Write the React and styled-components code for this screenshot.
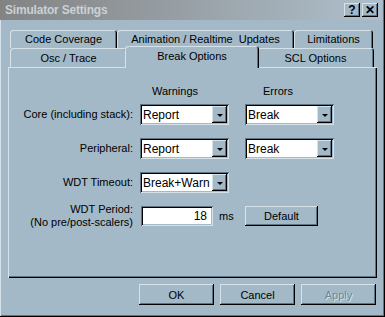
import React from "react";
import styled, { createGlobalStyle } from "styled-components";

const face = "#a3b9c7";
const light = "#d6e2ea";
const shadow = "#5e7483";
const dark = "#000000";

const GlobalStyle = createGlobalStyle`
  body {
    margin: 0;
    background: ${face};
    font-family: "Liberation Sans", Arial, sans-serif;
    font-size: 11px;
    color: #000;
  }
`;

const Window = styled.div`
  width: 385px;
  height: 317px;
  box-sizing: border-box;
  background: ${face};
  display: flex;
  flex-direction: column;
  box-shadow: inset -1px -1px ${dark}, inset 1px 0 ${light}, inset -2px -2px ${shadow};
`;

const TitleBar = styled.div`
  height: 20px;
  margin-right: 3px;
  display: flex;
  align-items: center;
  padding: 0 4px 0 5px;
  background: linear-gradient(to right, #838383, #aebfcb);
`;

const Title = styled.div`
  flex: 1;
  font-weight: bold;
  font-size: 12px;
  color: #c9d1d7;
  letter-spacing: -0.2px;
`;

const CaptionButton = styled.div`
  width: 16px;
  height: 14px;
  box-sizing: border-box;
  margin-left: ${p => p.$gap || 0}px;
  background: ${face};
  display: flex;
  align-items: center;
  justify-content: center;
  font-weight: bold;
  font-size: 12px;
  line-height: 1;
  box-shadow: inset -1px -1px ${dark}, inset 1px 1px ${light}, inset -2px -2px ${shadow};
`;

const Tabs = styled.div`
  margin: 10px 0 0 10px;
  display: flex;
  flex-direction: column;
`;

const TabRow = styled.div`
  display: flex;
  align-items: flex-end;
  height: ${p => p.$h}px;
`;

const Tab = styled.div`
  width: ${p => p.$w}px;
  height: ${p => (p.$active ? p.$h + 3 : p.$h)}px;
  margin: ${p => (p.$active ? "0 -2px -1px -2px" : "0")};
  padding-bottom: ${p => (p.$active ? 2 : 0)}px;
  position: relative;
  z-index: ${p => (p.$active ? 2 : 0)};
  box-sizing: border-box;
  flex-shrink: 0;
  background: ${face};
  border-radius: 3px 3px 0 0;
  display: flex;
  align-items: center;
  justify-content: center;
  white-space: pre;
  box-shadow: inset 1px 1px ${light}, inset -1px 0 ${dark}, inset -2px 0 ${shadow};
`;

const Panel = styled.div`
  margin-left: 8px;
  width: 369px;
  height: 211px;
  box-sizing: border-box;
  position: relative;
  z-index: 1;
  box-shadow: inset 1px 1px ${light}, inset -1px -1px ${dark}, inset -2px -2px ${shadow};
  display: flex;
  flex-direction: column;
`;

const Row = styled.div`
  display: flex;
  align-items: center;
  height: ${p => p.$h || 21}px;
  margin-top: ${p => p.$mt}px;
`;

const Label = styled.div`
  width: 125px;
  text-align: right;
  line-height: 13px;
  flex-shrink: 0;
`;

const Heading = styled.div`
  width: ${p => p.$w}px;
  margin-left: ${p => p.$ml}px;
  padding-left: ${p => p.$pl}px;
  box-sizing: border-box;
`;

const Sunken = styled.div`
  width: ${p => p.$w}px;
  height: ${p => p.$h || 21}px;
  margin-left: ${p => p.$ml}px;
  box-sizing: border-box;
  background: #fff;
  padding: 2px;
  display: flex;
  align-items: center;
  box-shadow: inset 1px 1px ${shadow}, inset -1px -1px ${light}, inset 2px 2px ${dark},
    inset -2px -2px ${face};
`;

const Value = styled.div`
  flex: 1;
  padding: 0 ${p => (p.$right ? 4 : 1)}px 0 1px;
  text-align: ${p => (p.$right ? "right" : "left")};
  font-size: 12px;
`;

const DropButton = styled.div`
  width: 15px;
  height: 17px;
  box-sizing: border-box;
  background: ${face};
  display: flex;
  align-items: center;
  justify-content: center;
  box-shadow: inset -1px -1px ${dark}, inset 1px 1px ${light}, inset -2px -2px ${shadow};
`;

const Arrow = styled.div`
  width: 0;
  height: 0;
  margin-top: 1px;
  border-left: 3px solid transparent;
  border-right: 3px solid transparent;
  border-top: 3px solid ${dark};
`;

const Unit = styled.div`
  margin-left: 6px;
  width: 27px;
`;

const Button = styled.div`
  width: ${p => p.$w || 75}px;
  height: ${p => p.$h || 21}px;
  margin-left: ${p => p.$ml || 0}px;
  box-sizing: border-box;
  background: ${face};
  display: flex;
  align-items: center;
  justify-content: center;
  color: ${p => (p.$disabled ? "#6f8796" : "#000")};
  text-shadow: ${p => (p.$disabled ? `1px 1px ${light}` : "none")};
  box-shadow: inset -1px -1px ${dark}, inset 1px 1px ${light}, inset -2px -2px ${shadow};
`;

const Footer = styled.div`
  display: flex;
  margin: 6px 0 0 139px;
`;

const Combo = ({ w, ml, value }) => (
  <Sunken $w={w} $ml={ml}>
    <Value>{value}</Value>
    <DropButton>
      <Arrow />
    </DropButton>
  </Sunken>
);

const backTabs = [
  ["Code Coverage", 107],
  ["Animation / Realtime  Updates", 177],
  ["Limitations", 79],
];

const frontTabs = [
  ["Osc / Trace", 117],
  ["Break Options", 130, true],
  ["SCL Options", 117],
];

export default function App() {
  return (
    <>
      <GlobalStyle />
      <Window>
        <TitleBar>
          <Title>Simulator Settings</Title>
          <CaptionButton>?</CaptionButton>
          <CaptionButton $gap={2}>✕</CaptionButton>
        </TitleBar>
        <Tabs>
          <TabRow $h={18}>
            {backTabs.map(([t, w]) => (
              <Tab key={t} $w={w} $h={18}>{t}</Tab>
            ))}
          </TabRow>
          <TabRow $h={19}>
            {frontTabs.map(([t, w, a]) => (
              <Tab key={t} $w={a ? w + 4 : w} $h={19} $active={a}>{t}</Tab>
            ))}
          </TabRow>
        </Tabs>
        <Panel>
          <Row $h={13} $mt={17}>
            <Label />
            <Heading $w={89} $ml={7} $pl={12}>Warnings</Heading>
            <Heading $w={88} $ml={16} $pl={18}>Errors</Heading>
          </Row>
          <Row $mt={7}>
            <Label>Core (including stack):</Label>
            <Combo w={89} ml={7} value="Report" />
            <Combo w={89} ml={16} value="Break" />
          </Row>
          <Row $mt={13}>
            <Label>Peripheral:</Label>
            <Combo w={89} ml={7} value="Report" />
            <Combo w={89} ml={16} value="Break" />
          </Row>
          <Row $mt={13}>
            <Label>WDT Timeout:</Label>
            <Combo w={89} ml={7} value="Break+Warn" />
          </Row>
          <Row $h={20} $mt={13}>
            <Label>
              WDT Period:
              <br />
              (No pre/post-scalers)
            </Label>
            <Sunken $w={72} $h={20} $ml={8}>
              <Value $right>18</Value>
            </Sunken>
            <Unit>ms</Unit>
            <Button $w={73} $h={20} $ml={-1}>Default</Button>
          </Row>
        </Panel>
        <Footer>
          <Button>OK</Button>
          <Button $ml={6}>Cancel</Button>
          <Button $ml={6} $disabled>Apply</Button>
        </Footer>
      </Window>
    </>
  );
}
